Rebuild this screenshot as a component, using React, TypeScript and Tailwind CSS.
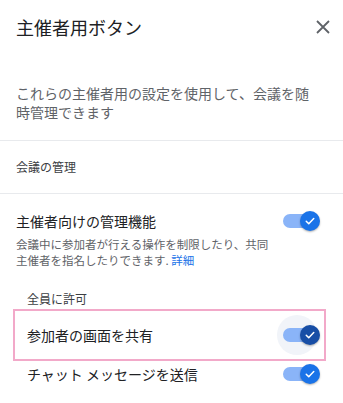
function Check() {
  return (
    <svg width="12" height="12" viewBox="0 0 24 24" fill="none">
      <path d="M4.5 12.5l5 5L19.5 7" stroke="white" strokeWidth="3" strokeLinecap="round" strokeLinejoin="round" />
    </svg>
  )
}

function Toggle({ focused = false }: { focused?: boolean }) {
  return (
    <div className="relative w-[37px] h-5 shrink-0">
      {focused && <div className="absolute -left-[6px] -top-[10px] w-10 h-10 rounded-full bg-[#f1f4f9]" />}
      <div className="absolute left-0 top-[3px] w-[30px] h-[14px] rounded-full bg-[#8ab4f8]" />
      <div
        className={`absolute right-0 top-0 w-5 h-5 rounded-full flex items-center justify-center shadow-[0_1px_2px_rgba(0,0,0,0.3)] ${
          focused ? 'bg-[#174ea6]' : 'bg-[#1a73e8]'
        }`}
      >
        <Check />
      </div>
    </div>
  )
}

export default function App() {
  return (
    <div className="w-[343px] h-[403px] overflow-hidden bg-white font-['Noto_Sans_CJK_JP',sans-serif] text-[#202124]">
      <div className="h-[54px] flex items-center justify-between pl-4 pr-[13px]">
        <h1 className="text-[18px] leading-6">主催者用ボタン</h1>
        <svg width="14" height="14" viewBox="0 0 14 14" className="text-[#5f6368]">
          <path d="M1 1l12 12M13 1L1 13" stroke="currentColor" strokeWidth="1.8" />
        </svg>
      </div>

      <p className="pt-[30px] pb-[18px] pl-4 pr-6 text-[14px] leading-[19px] text-[#5f6368] border-b border-[#e8eaed]">
        これらの主催者用の設定を使用して、会議を随時管理できます
      </p>

      <div className="h-[53px] flex items-center px-4 text-[12px] text-[#3c4043] border-b border-[#e8eaed]">
        会議の管理
      </div>

      <div className="flex items-start pl-4 pr-[23px] pt-[17px]">
        <div className="flex-1">
          <div className="text-[14px] leading-5">主催者向けの管理機能</div>
          <div className="mt-[5px] w-[258px] text-[11.5px] leading-4 text-[#5f6368]">
            会議中に参加者が行える操作を制限したり、共同主催者を指名したりできます.{' '}
            <span className="text-[#1a73e8]">詳細</span>
          </div>
        </div>
        <Toggle />
      </div>

      <div className="mt-[23px] pl-[27px] text-[12px] leading-4 text-[#3c4043]">全員に許可</div>

      <div className="mt-[2px] ml-[13px] mr-[17px] h-[52px] border-2 border-[#f2a9c9] overflow-hidden flex items-center pl-3 pr-1">
        <div className="flex-1 text-[14px] leading-5">参加者の画面を共有</div>
        <Toggle focused />
      </div>

      <div className="mt-[3px] flex items-center pl-[27px] pr-[23px]">
        <div className="flex-1 text-[14px] leading-5">チャット メッセージを送信</div>
        <Toggle />
      </div>
    </div>
  )
}
